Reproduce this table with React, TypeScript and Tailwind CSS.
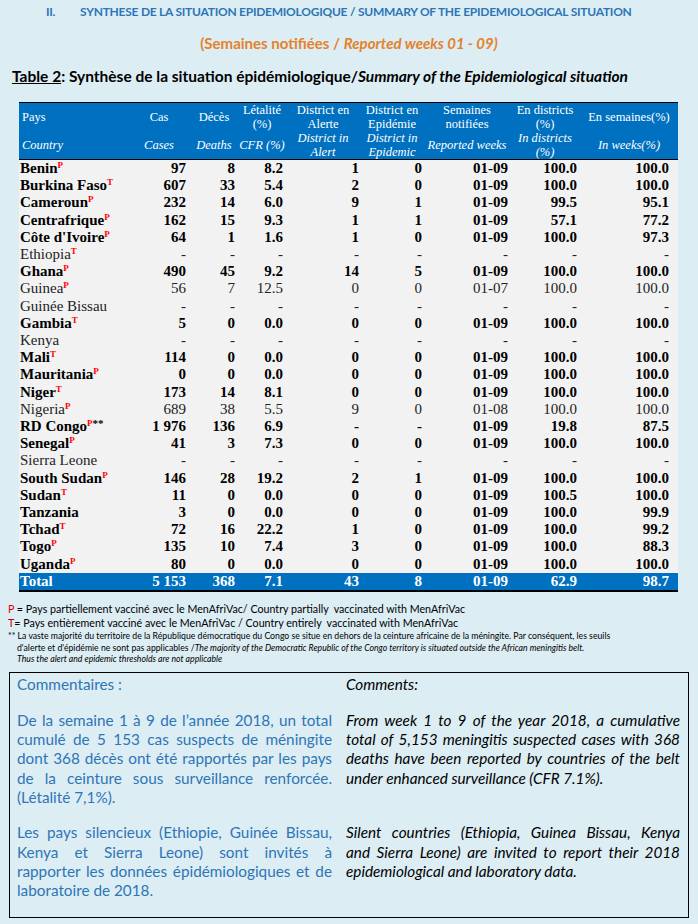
import React from "react";

type Row = {
  name: string;
  mark?: "P" | "T";
  stars?: boolean;
  bold: boolean;
  v: string[];
};

const D = ["-", "-", "-", "-", "-", "-", "-", "-"];

const rows: Row[] = [
  { name: "Benin", mark: "P", bold: true, v: ["97", "8", "8.2", "1", "0", "01-09", "100.0", "100.0"] },
  { name: "Burkina Faso", mark: "T", bold: true, v: ["607", "33", "5.4", "2", "0", "01-09", "100.0", "100.0"] },
  { name: "Cameroun", mark: "P", bold: true, v: ["232", "14", "6.0", "9", "1", "01-09", "99.5", "95.1"] },
  { name: "Centrafrique", mark: "P", bold: true, v: ["162", "15", "9.3", "1", "1", "01-09", "57.1", "77.2"] },
  { name: "Côte d'Ivoire", mark: "P", bold: true, v: ["64", "1", "1.6", "1", "0", "01-09", "100.0", "97.3"] },
  { name: "Ethiopia", mark: "T", bold: false, v: D },
  { name: "Ghana", mark: "P", bold: true, v: ["490", "45", "9.2", "14", "5", "01-09", "100.0", "100.0"] },
  { name: "Guinea", mark: "P", bold: false, v: ["56", "7", "12.5", "0", "0", "01-07", "100.0", "100.0"] },
  { name: "Guinée Bissau", bold: false, v: D },
  { name: "Gambia", mark: "T", bold: true, v: ["5", "0", "0.0", "0", "0", "01-09", "100.0", "100.0"] },
  { name: "Kenya", bold: false, v: D },
  { name: "Mali", mark: "T", bold: true, v: ["114", "0", "0.0", "0", "0", "01-09", "100.0", "100.0"] },
  { name: "Mauritania", mark: "P", bold: true, v: ["0", "0", "0.0", "0", "0", "01-09", "100.0", "100.0"] },
  { name: "Niger", mark: "T", bold: true, v: ["173", "14", "8.1", "0", "0", "01-09", "100.0", "100.0"] },
  { name: "Nigeria", mark: "P", bold: false, v: ["689", "38", "5.5", "9", "0", "01-08", "100.0", "100.0"] },
  { name: "RD Congo", mark: "P", stars: true, bold: true, v: ["1 976", "136", "6.9", "-", "-", "01-09", "19.8", "87.5"] },
  { name: "Senegal", mark: "P", bold: true, v: ["41", "3", "7.3", "0", "0", "01-09", "100.0", "100.0"] },
  { name: "Sierra Leone", bold: false, v: D },
  { name: "South Sudan", mark: "P", bold: true, v: ["146", "28", "19.2", "2", "1", "01-09", "100.0", "100.0"] },
  { name: "Sudan", mark: "T", bold: true, v: ["11", "0", "0.0", "0", "0", "01-09", "100.5", "100.0"] },
  { name: "Tanzania", bold: true, v: ["3", "0", "0.0", "0", "0", "01-09", "100.0", "99.9"] },
  { name: "Tchad", mark: "T", bold: true, v: ["72", "16", "22.2", "1", "0", "01-09", "100.0", "99.2"] },
  { name: "Togo", mark: "P", bold: true, v: ["135", "10", "7.4", "3", "0", "01-09", "100.0", "88.3"] },
  { name: "Uganda", mark: "P", bold: true, v: ["80", "0", "0.0", "0", "0", "01-09", "100.0", "100.0"] },
];

const total = ["5 153", "368", "7.1", "43", "8", "01-09", "62.9", "98.7"];

// right padding per numeric column, to land the digits where the report has them
const pad = ["pr-[4px]", "pr-[3px]", "pr-[3px]", "pr-[1px]", "pr-[2px]", "pr-[2px]", "pr-[3px]", "pr-[9px]"];

const sans = "font-['Lato','Open_Sans',sans-serif]";
const serif = "font-['Liberation_Serif','DejaVu_Serif',serif]";

function Line({ children, last = false }: { children: React.ReactNode; last?: boolean }) {
  return (
    <div className={`whitespace-nowrap text-justify ${last ? "" : "[text-align-last:justify]"}`}>{children}</div>
  );
}

export default function App() {
  return (
    <div className={`min-h-[924px] w-[698px] bg-[#dcedf4] ${sans} text-black`}>
      <div className="flex pt-[5px] text-[12px] font-bold leading-[14px] tracking-[-0.25px] text-[#2e75b6]">
        <span className="ml-[46px] w-[34px]">II.</span>
        <span>SYNTHESE DE LA SITUATION EPIDEMIOLOGIQUE / SUMMARY OF THE EPIDEMIOLOGICAL SITUATION</span>
      </div>

      <div className="mt-[14px] text-center text-[15px] font-bold leading-[20px] text-[#e5822a]">
        (Semaines notifiées / <span className="italic">Reported weeks 01 - 09)</span>
      </div>

      <div className="mt-[13px] pl-[12px] text-[15.5px] font-bold leading-[20px]">
        <span className="underline">Table 2</span>: Synthèse de la situation épidémiologique/
        <span className="italic">Summary of the Epidemiological situation</span>
      </div>

      <table className={`mt-[16px] ml-[19px] w-[659px] table-fixed border-collapse ${serif}`}>
        <colgroup>
          <col className="w-[109px]" />
          <col className="w-[62px]" />
          <col className="w-[48px]" />
          <col className="w-[48px]" />
          <col className="w-[74px]" />
          <col className="w-[64px]" />
          <col className="w-[86px]" />
          <col className="w-[70px]" />
          <col className="w-[98px]" />
        </colgroup>
        <thead className="bg-[#0070c0] text-[12.5px] leading-[14px] text-white">
          <tr className="h-[28px] border-t border-black">
            <th className="p-0 pl-[3px] text-left font-normal">Pays</th>
            <th className="p-0 font-normal">Cas</th>
            <th className="p-0 font-normal">Décès</th>
            <th className="p-0 font-normal">Létalité<br />(%)</th>
            <th className="p-0 font-normal">District en<br />Alerte</th>
            <th className="p-0 font-normal">District en<br />Epidémie</th>
            <th className="p-0 font-normal">Semaines<br />notifiées</th>
            <th className="p-0 font-normal">En districts<br />(%)</th>
            <th className="p-0 font-normal">En semaines(%)</th>
          </tr>
          <tr className="h-[28px] border-b-[1.5px] border-black italic">
            <th className="p-0 pl-[3px] text-left font-normal">Country</th>
            <th className="p-0 font-normal">Cases</th>
            <th className="p-0 font-normal">Deaths</th>
            <th className="p-0 font-normal">CFR (%)</th>
            <th className="p-0 font-normal">District in<br />Alert</th>
            <th className="p-0 font-normal">District in<br />Epidemic</th>
            <th className="p-0 font-normal">Reported weeks</th>
            <th className="p-0 font-normal">
              <div className="h-[28px] overflow-hidden">In districts<br />(%)</div>
            </th>
            <th className="p-0 font-normal">In weeks(%)</th>
          </tr>
        </thead>
        <tbody className="bg-[#f2f2f2] text-[15px] leading-[17.2px]">
          {rows.map((r) => (
            <tr key={r.name} className={`h-[17.2px] ${r.bold ? "font-bold" : "font-normal text-[#222]"}`}>
              <td className="whitespace-nowrap p-0 pl-[1px]">
                {r.name}
                {r.mark && <span className="relative -top-[5px] text-[9px] font-bold leading-none text-[#ff0000]">{r.mark}</span>}
                {r.stars && <span className="relative -top-[4px] text-[11px] font-bold leading-none">**</span>}
              </td>
              {r.v.map((x, i) => (
                <td key={i} className={`p-0 text-right ${pad[i]}`}>{x}</td>
              ))}
            </tr>
          ))}
          <tr className="h-[17.2px] border-b-2 border-black bg-[#0070c0] font-bold text-white">
            <td className="p-0 pl-[1px]">Total</td>
            {total.map((x, i) => (
              <td key={i} className={`p-0 text-right ${pad[i]}`}>{x}</td>
            ))}
          </tr>
        </tbody>
      </table>

      <div className="mt-[10px] pl-[8px] text-[10.7px] leading-[14px]">
        <div><span className="text-[#e00000]">P</span> = Pays partiellement vacciné avec le MenAfriVac/ Country partially&nbsp; vaccinated with MenAfriVac</div>
        <div><span className="text-[#c00000]">T</span>= Pays entièrement vacciné avec le MenAfriVac / Country entirely&nbsp; vaccinated with MenAfriVac</div>
      </div>
      <div className="whitespace-nowrap pl-[8px] text-[8.7px] leading-[11.5px]">
        <div>** La vaste majorité du territoire de la République démocratique du Congo se situe en dehors de la ceinture africaine de la méningite. Par conséquent, les seuils</div>
        <div className="pl-[9px]">d'alerte et d'épidémie ne sont pas applicables /<span className="italic">The majority of the Democratic Republic of the Congo territory is situated outside the African meningitis belt.</span></div>
        <div className="pl-[9px] italic">Thus the alert and epidemic thresholds are not applicable</div>
      </div>

      <div className="mx-[9px] mt-[7px] border-[1.5px] border-black px-[7px] pt-[2px] pb-[16px] text-[15.3px] leading-[19.3px]">
        <div className="flex gap-[14px]">
          <div className="w-[315px] text-[#2e75b6]">
            <div>Commentaires :</div>
            <div className="mt-[17px]">
              <Line>De la semaine 1 à 9 de l’année 2018, un total</Line>
              <Line>cumulé de 5 153 cas suspects de méningite</Line>
              <Line>dont 368 décès ont été rapportés par les pays</Line>
              <Line>de la ceinture sous surveillance renforcée.</Line>
              <Line last>(Létalité 7,1%).</Line>
            </div>
            <div className="mt-[16px]">
              <Line>Les pays silencieux (Ethiopie, Guinée Bissau,</Line>
              <Line>Kenya et Sierra Leone) sont invités à</Line>
              <Line>rapporter les données épidémiologiques et de</Line>
              <Line last>laboratoire de 2018.</Line>
            </div>
          </div>
          <div className="w-[334px] italic">
            <div>Comments:</div>
            <div className="mt-[17px]">
              <Line>From week 1 to 9 of the year 2018, a cumulative</Line>
              <Line>total of 5,153 meningitis suspected cases with 368</Line>
              <Line>deaths have been reported by countries of the belt</Line>
              <Line last>under enhanced surveillance (CFR 7.1%).</Line>
            </div>
            <div className="mt-[35.3px]">
              <Line>Silent countries (Ethiopia, Guinea Bissau, Kenya</Line>
              <Line>and Sierra Leone) are invited to report their 2018</Line>
              <Line last>epidemiological and laboratory data.</Line>
            </div>
          </div>
        </div>
      </div>
    </div>
  );
}
